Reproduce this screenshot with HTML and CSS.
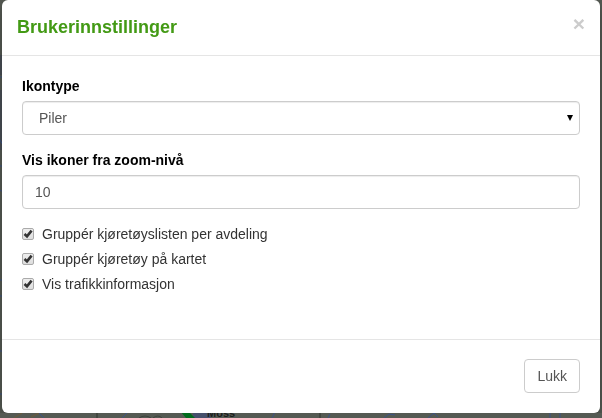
FILE: index.html
```html
<!DOCTYPE html>
<html lang="no">
<head>
    <meta charset="UTF-8">
    <meta name="viewport" content="width=device-width, initial-scale=1.0">
    <title>Brukerinnstillinger</title>
    <link rel="stylesheet" href="styles.css">
</head>
<body>
    <!-- Kart bak dialogen -->
    <svg class="map" viewBox="0 0 602 418" preserveAspectRatio="xMidYMax slice" aria-hidden="true">
        <rect width="602" height="418" fill="#555a53"/>
        <path d="M0 55h3v20H0zM0 90h3v60H0z" fill="#494e55"/>
        <path d="M193 410h18v8h-18z" fill="#46506c"/>
        <path d="M0 77h3M0 140l3 5M0 166h3M0 190l3 2M0 280h3M0 296h3M0 351h3M0 394h3M38 412l6 6M122 418l5-5M272 418l3-6M328 418l2-4M384 418l5-4 6 1M428 418l6-5 4 4M550 412v6M560 413v5" fill="none" stroke="#3c5385"/>
        <path d="M14 418l8-5M31 417l8-4" fill="none" stroke="#6d5b3a"/>
        <path d="M97 412v6M320 412v6" stroke="#30352f"/>
        <path d="M139 418q6-4 12 0M153 418q5-4 9 0" fill="none" stroke="#3d423c"/>
        <path d="M180 411l10 2 5 5h-9z" fill="#006b1c"/>
        <text class="town" x="207" y="417">Moss</text>
    </svg>

    <div class="modal" role="dialog" aria-labelledby="modal-title">
        <div class="modal-header">
            <h4 class="modal-title" id="modal-title">Brukerinnstillinger</h4>
            <button type="button" class="close" aria-label="Lukk dialog">&times;</button>
        </div>
        <form class="modal-body">
            <div class="form-group">
                <label for="icon-type">Ikontype</label>
                <div class="select-wrap">
                    <select class="form-control" id="icon-type">
                        <option>Piler</option>
                    </select>
                    <svg class="arrow" width="6" height="6" viewBox="0 0 6 6"><path d="M0 0h6L3 6z"/></svg>
                </div>
            </div>
            <div class="form-group">
                <label for="zoom-level">Vis ikoner fra zoom-nivå</label>
                <input type="text" class="form-control" id="zoom-level" value="10">
            </div>
            <label class="checkbox"><input type="checkbox" checked>Gruppér kjøretøyslisten per avdeling</label>
            <label class="checkbox"><input type="checkbox" checked>Gruppér kjøretøy på kartet</label>
            <label class="checkbox"><input type="checkbox" checked>Vis trafikkinformasjon</label>
        </form>
        <div class="modal-footer">
            <button type="button" class="btn">Lukk</button>
        </div>
    </div>
</body>
</html>
```

FILE: styles.css
```css
* {
    box-sizing: border-box;
}
body {
    margin: 0;
    padding: 0 2px;
    background: #555a53;
    color: #333;
    font-family: Arial, "Liberation Sans", sans-serif;
    font-size: 14px;
    line-height: 20px;
}
.map {
    position: fixed;
    top: 0;
    left: 0;
    width: 100%;
    height: 100%;
}
.town {
    font-size: 11px;
    font-weight: bold;
    fill: #1c1e1c;
}
.modal {
    position: relative;
    background: #fff;
    border-radius: 6px;
    box-shadow: 0 5px 15px rgba(0, 0, 0, 0.3);
}
.modal-header {
    display: flex;
    justify-content: space-between;
    align-items: flex-start;
    padding: 15px;
    border-bottom: 1px solid #e5e5e5;
}
.modal-title {
    margin: 0;
    color: #439a15;
    font-size: 18px;
    line-height: 25px;
}
.close {
    padding: 0;
    border: 0;
    background: none;
    color: #ccc;
    font-family: inherit;
    font-size: 21px;
    font-weight: bold;
    line-height: 18px;
}
.modal-body {
    padding: 20px 20px 40px;
}
.form-group {
    margin-bottom: 15px;
}
.form-group label {
    display: block;
    margin-bottom: 5px;
    color: #000;
    font-weight: bold;
}
.form-control {
    display: block;
    width: 100%;
    height: 34px;
    padding: 6px 12px;
    border: 1px solid #ccc;
    border-radius: 4px;
    background: #fff;
    box-shadow: inset 0 1px 1px rgba(0, 0, 0, 0.075);
    color: #555;
    font-family: inherit;
    font-size: 14px;
    line-height: 20px;
}
select.form-control {
    appearance: none;
    padding-left: 16px;
}
.select-wrap {
    position: relative;
}
.arrow {
    position: absolute;
    top: 14px;
    right: 7px;
    pointer-events: none;
}
.checkbox {
    display: flex;
    align-items: center;
    gap: 8px;
    margin-bottom: 5px;
}
.checkbox input {
    appearance: none;
    width: 12px;
    height: 12px;
    margin: 0;
    border: 1px solid #aaa;
    border-radius: 2px;
    background: linear-gradient(#eee, #ddd);
}
.checkbox input:checked {
    background: url("data:image/svg+xml,%3Csvg xmlns='http://www.w3.org/2000/svg' viewBox='0 0 10 10'%3E%3Cpath d='M1.5 5L4 7.4L8.6 1.6' fill='none' stroke='%23333' stroke-width='2.6'/%3E%3C/svg%3E"), linear-gradient(#eee, #ddd);
}
.modal-footer {
    display: flex;
    justify-content: flex-end;
    padding: 19px 20px 20px;
    border-top: 1px solid #e5e5e5;
}
.btn {
    padding: 6px 12px;
    border: 1px solid #ccc;
    border-radius: 4px;
    background: #fff;
    color: #555;
    font-family: inherit;
    font-size: 14px;
    line-height: 20px;
}
```
